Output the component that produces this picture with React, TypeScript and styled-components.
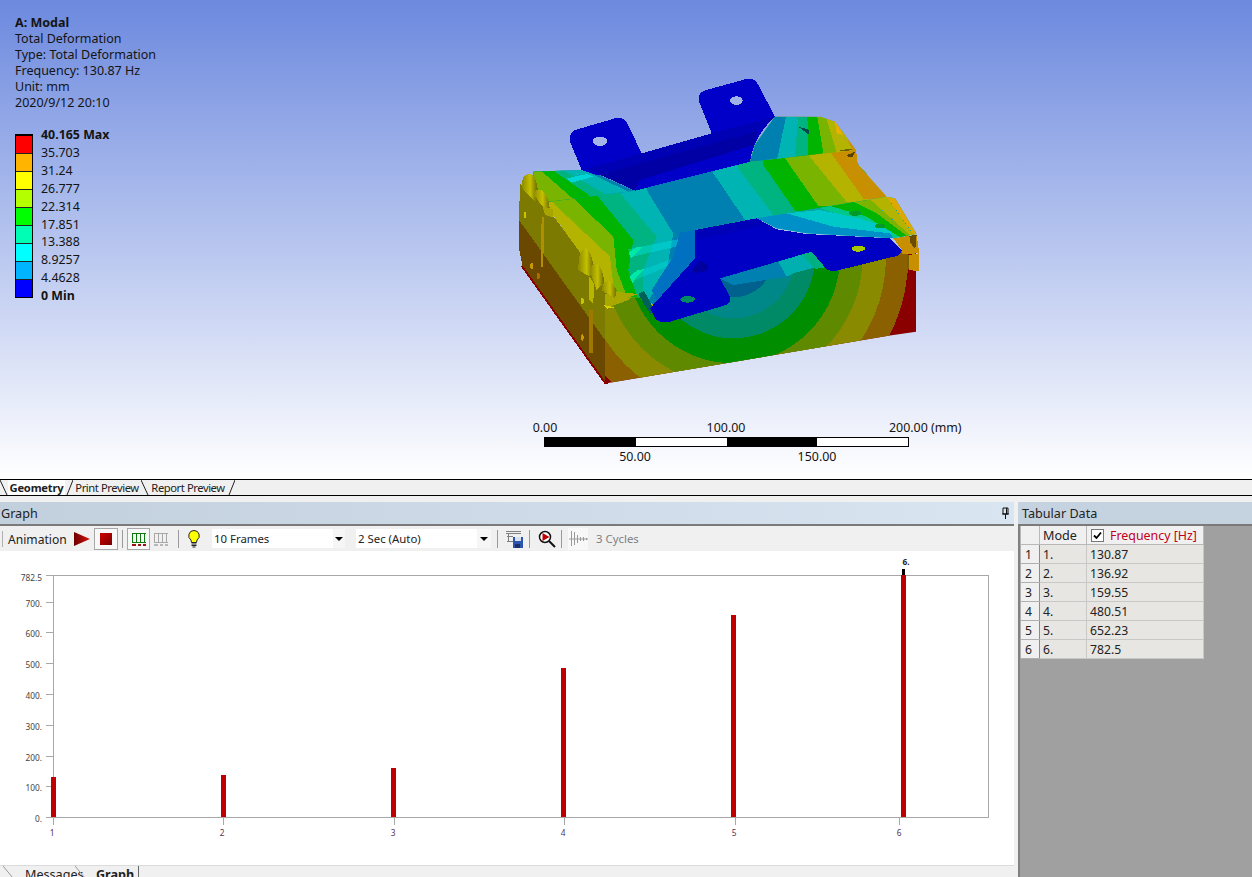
import React from "react";
import styled, { createGlobalStyle } from "styled-components";

const Global = createGlobalStyle`
  html, body { margin: 0; padding: 0; background: #f0f0f0; }
  body { font-family: "Noto Sans", "Open Sans", "Liberation Sans", sans-serif; font-size: 12px; color: #111; }
  #root { width: 1252px; height: 877px; overflow: hidden; }
`;

const Page = styled.div`
  width: 1252px; height: 877px; display: flex; flex-direction: column; overflow: hidden; background: #f0f0f0;
`;
const Viewport = styled.div`
  position: relative; height: 479px; flex: none; overflow: hidden;
  background: linear-gradient(180deg, #6c89de 0%, #ffffff 100%);
`;
const Annotation = styled.div`
  position: absolute; left: 15px; top: 15px; line-height: 16px; font-size: 12.5px; color: #141414;
`;
const AnnotationTitle = styled.div` font-weight: 700; `;
const Legend = styled.div`
  position: absolute; left: 15px; top: 134px; display: flex; gap: 8px;
`;
const LegendBar = styled.div`
  width: 16px; height: 161px; border: 1px solid #000; border-top-width: 2px; display: flex; flex-direction: column;
`;
const Swatch = styled.div<{ $c: string }>`
  flex: 1; background: ${p => p.$c}; & + & { border-top: 1px solid #222; }
`;
const LegendLabels = styled.div`
  display: flex; flex-direction: column; margin-top: -8px; line-height: 17.9px; font-size: 12.4px; color: #141414;
`;
const LegendStrong = styled.div` font-weight: 700; `;
const ModelSvg = styled.svg`
  position: absolute; left: 500px; top: 70px; width: 440px; height: 320px;
`;
const Scale = styled.div`
  position: absolute; left: 544px; top: 437px; width: 365px; height: 10px; box-sizing: border-box;
  border: 1px solid #000; display: grid; grid-template-columns: repeat(4, 1fr); background: #fff;
`;
const ScaleCell = styled.div<{ $dark?: boolean }>` background: ${p => (p.$dark ? "#000" : "#fff")}; `;
const ScaleLabel = styled.span<{ $up?: boolean }>`
  position: absolute; font-size: 12.4px; line-height: 14px; color: #141414; white-space: nowrap;
  top: ${p => (p.$up ? "-17px" : "12px")}; transform: translateX(-50%);
`;
const ScaleUnit = styled(ScaleLabel)` transform: none; `;

const TabBar = styled.div`
  height: 15px; flex: none; display: flex; align-items: stretch; background: #f0f0f0;
  border-top: 1px solid #000; border-bottom: 1px solid #000; overflow: hidden;
`;
const Tab = styled.div<{ $on?: boolean; $w: number }>`
  width: ${p => p.$w}px; flex: none; display: flex; align-items: center; justify-content: center; white-space: nowrap;
  font-size: 11.2px; line-height: 15px; font-weight: ${p => (p.$on ? 700 : 400)};
  letter-spacing: ${p => (p.$on ? "-0.2px" : "-0.42px")};
  background: ${p => (p.$on ? "#fff" : "transparent")}; color: #222;
`;
const Slant = styled.svg` width: 8px; height: 15px; flex: none; `;
const Lower = styled.div` flex: 1; display: flex; min-height: 0; padding-top: 6px; `;
const LeftPane = styled.div` width: 1014px; flex: none; display: flex; flex-direction: column; `;
const RightPane = styled.div`
  flex: 1; margin-left: 4px; display: flex; flex-direction: column; background: #a0a0a0; border-left: 2px solid #808080;
`;
const Header = styled.div`
  height: 22px; flex: none; display: flex; align-items: center; justify-content: space-between; padding: 0 4px 0 1px;
  font-size: 12.6px; color: #222; background: linear-gradient(90deg, #c2cfdd 0%, #d9e5f1 100%);
  border-bottom: 2px solid #7a7a7a;
`;
const RightHeader = styled(Header)` margin-left: -2px; padding-left: 4px; background: #c5d2df; `;
const Toolbar = styled.div`
  height: 25px; flex: none; display: flex; align-items: center; background: #f0f0f0; padding-left: 2px; color: #222;
`;
const Grip = styled.span` width: 1px; height: 16px; background: #b0b0b0; margin-right: 5px; flex: none; `;
const ToolText = styled.span` font-size: 12.1px; width: 60px; flex: none; white-space: nowrap; padding-top: 1px; `;
const ToolSep = styled.span<{ $l?: number; $r?: number }>`
  width: 1px; height: 18px; flex: none; background: #9a9a9a;
  margin-left: ${p => p.$l ?? 4}px; margin-right: ${p => p.$r ?? 4}px;
`;
const IconBtn = styled.span<{ $on?: boolean; $w?: number; $dither?: boolean }>`
  width: ${p => p.$w ?? 22}px; height: 22px; flex: none; display: flex; align-items: center; justify-content: center; box-sizing: border-box;
  ${p => p.$on && "border: 1px solid #a8a8a8; background: #f8f8f8;"}
  ${p => p.$dither && "background: #f8f8f8;"}
`;
const PlayIcon = styled.svg` width: 20px; height: 18px; flex: none; margin-left: 6px; `;
const BulbIcon = styled.svg` width: 12px; height: 18px; flex: none; margin-left: 5px; `;
const PlainIcon = styled.svg` flex: none; `;
const Select = styled.div<{ $w: number; $ml: number }>`
  width: ${p => p.$w}px; height: 19px; flex: none; margin-left: ${p => p.$ml}px; display: flex; align-items: center; justify-content: space-between;
  background: #fff; font-size: 11.4px; line-height: 21px; color: #222; padding-left: 2px; box-sizing: border-box;
`;
const Caret = styled.span<{ $w: number }>`
  width: ${p => p.$w}px; align-self: stretch; background: #f6f6f6; display: flex; align-items: center; justify-content: center;
  &::before { content: ""; border-left: 4px solid transparent; border-right: 4px solid transparent; border-top: 4px solid #000; }
`;
const Dim = styled.span` font-size: 11.4px; color: #808080; margin-left: 8px; white-space: nowrap; `;
const ChartSvg = styled.svg` display: block; width: 1014px; height: 314px; background: #fff; flex: none; `;
const BottomTabs = styled.div`
  flex: 1; min-height: 0; display: flex; background: #f0f0f0; border-top: 1px solid #dcdcdc; padding-left: 3px; overflow: hidden;
`;
const BottomTab = styled.div<{ $on?: boolean; $w: number; $pl: number }>`
  width: ${p => p.$w}px; flex: none; box-sizing: border-box; font-size: 12.6px; line-height: 16px; padding: 1px 0 0 ${p => p.$pl}px; white-space: nowrap; height: 18px;
  font-weight: ${p => (p.$on ? 700 : 400)}; color: #222;
  ${p => p.$on && "border-right: 1px solid #666;"}
`;
const BottomSlant = styled.svg` width: 11px; height: 12px; flex: none; `;
const Table = styled.table`
  border-collapse: collapse; table-layout: fixed; width: 183px; font-size: 12.2px; color: #222;
`;
const HeadCell = styled.th<{ $w: number }>`
  width: ${p => p.$w}px; height: 18px; padding: 1px 0 0 3px; box-sizing: border-box; font-weight: 400; text-align: left;
  background: #f0f0f0; border: 1px solid #b8b8b8; border-top: 0; white-space: nowrap; font-size: 12.6px;
`;
const RowHead = styled.td`
  height: 19px; padding: 1px 0 0 4px; box-sizing: border-box; background: #f0f0f0; border: 1px solid #b0b0b0; border-right-color: #8a8a8a;
`;
const Cell = styled.td`
  height: 19px; padding: 1px 0 0 3px; box-sizing: border-box; background: #e8e6e3; border: 1px solid #c8c8c8;
`;
const FreqHead = styled.div` display: flex; align-items: center; gap: 6px; color: #c00020; font-size: 12.4px; padding-left: 1px; `;
const Check = styled.span`
  width: 13px; height: 13px; flex: none; box-sizing: border-box; border: 1px solid #777; background: #fff; display: flex; align-items: center; justify-content: center;
`;

const LEGEND = ["#ff0000", "#ffb400", "#ffff00", "#b4ff00", "#00ff00", "#00ffb4", "#00ffff", "#00b4ff", "#0000ff"];
const VALUES = ["35.703", "31.24", "26.777", "22.314", "17.851", "13.388", "8.9257", "4.4628"];
const ROWS = ["130.87", "136.92", "159.55", "480.51", "652.23", "782.5"];

const SURFACE = "130,395 400,360 750,275 1050,240 1075,285 1160,380 770,445 585,480 585,565 450,720 420,682 330,682 325,662";

const Model = () => (
  <ModelSvg viewBox="0 0 1320 960" shapeRendering="crispEdges">
    <defs>
      <clipPath id="front"><polygon points="315,672 415,672 660,620 935,540 1210,540 1248,550 1248,785 1165,797 320,940 315,940" /></clipPath>
      <clipPath id="surf"><polygon points={SURFACE} /></clipPath>
      <clipPath id="backL"><polygon points="100,305 240,300 300,315 405,362 145,395 130,390 100,340" /></clipPath>
      <clipPath id="backR"><polygon points="750,275 765,225 825,140 960,140 1005,155 1068,240" /></clipPath>
      <clipPath id="ridge"><polygon points="770,445 1160,380 1185,385 1250,492 1180,505 920,490 830,475" /></clipPath>
      <linearGradient id="bump" x1="0" x2="1" y1="0" y2="0">
        <stop offset="0" stopColor="#8c8a00" /><stop offset="0.55" stopColor="#c4c000" /><stop offset="1" stopColor="#6e6c00" />
      </linearGradient>
    </defs>

    {/* left wall */}
    <polygon points="57,450 315,810 318,940 68,590 58,540" fill="#6a4800" />
    <polygon points="60,340 130,400 345,680 315,810 57,450" fill="#7c7a00" />
    <polygon points="68,590 315,937 325,940 315,940 66,590" fill="#8a0000" stroke="#8a0000" strokeWidth="4" />
    <polygon points="130,395 150,395 352,650 325,665" fill="#b4b400" />
    <polygon points="125,440 132,440 130,590 122,590" fill="#b09000" />
    <polygon points="268,720 280,720 278,850 268,850" fill="#a07800" />
    <polygon points="268,620 282,640 280,700 268,690" fill="#b8b400" />
    <ellipse cx="75" cy="435" rx="4" ry="10" fill="#c8c400" />
    <ellipse cx="95" cy="588" rx="4" ry="10" fill="#c89800" />
    <ellipse cx="115" cy="618" rx="4" ry="10" fill="#a87000" />
    <ellipse cx="247" cy="693" rx="4" ry="10" fill="#c8c400" />
    <ellipse cx="247" cy="803" rx="4" ry="10" fill="#c89800" />

    {/* front face with circular bands */}
    <g clipPath="url(#front)">
      <rect x="300" y="500" width="1000" height="460" fill="#8a0000" />
      <circle cx="700" cy="560" r="525" fill="#8a6000" />
      <circle cx="700" cy="560" r="458" fill="#8a8a00" />
      <circle cx="700" cy="560" r="388" fill="#5f8a00" />
      <circle cx="700" cy="560" r="320" fill="#008e00" />
      <circle cx="700" cy="560" r="245" fill="#008a66" />
      <circle cx="700" cy="560" r="185" fill="#008888" />
      <circle cx="700" cy="560" r="122" fill="#00608e" />
    </g>
    <polygon points="315,672 415,672 380,692 345,705 315,712" fill="#a8a800" />
    <polygon points="660,625 835,575 860,620 700,645" fill="#0080b0" />
    <polygon points="835,575 905,553 945,592 880,610 860,620" fill="#00b0b0" />
    <polygon points="905,553 935,545 975,592 945,597" fill="#00b080" />

    {/* main surface */}
    <g clipPath="url(#surf)">
      <rect x="100" y="220" width="1000" height="520" fill="#b4b400" />
      <polygon points="150,390 330,560 345,690 1100,700 1100,200 150,200" fill="#78b400" />
      <polygon points="215,380 340,500 350,600 385,690 1100,700 1100,200 215,200" fill="#00b400" />
      <polygon points="290,375 400,510 385,600 415,690 1100,700 1100,200 290,200" fill="#00b482" />
      <polygon points="360,370 470,500 430,600 430,690 1100,700 1100,200 360,200" fill="#00b4b4" />
      <polygon points="440,360 520,490 500,600 440,700 1100,720 1100,200 440,200" fill="#0080b0" />
      <polygon points="640,310 735,450 1100,450 1100,200 640,200" fill="#00b4b4" />
      <polygon points="715,295 820,435 1100,435 1100,200 715,200" fill="#00b482" />
      <polygon points="790,285 885,422 1100,422 1100,200 790,200" fill="#00b400" />
      <polygon points="855,265 955,408 1100,408 1100,200 855,200" fill="#78b400" />
      <polygon points="925,255 1040,396 1200,396 1200,200 925,200" fill="#b4b400" />
      <polygon points="990,245 1092,388 1200,388 1200,200 990,200" fill="#c89000" />
    </g>
    <polygon points="330,664 415,672 380,684 340,700 318,690" fill="#a8a800" />
    <polygon points="1040,242 1068,240 1074,288 1045,285" fill="#c89000" />
    <polygon points="1040,255 1066,245 1058,260 1046,262" fill="#5a4000" />

    {/* lighter strips on the surface beside the front bracket */}
    <polygon points="385,538 585,498 585,516 390,562" fill="#00e0e0" opacity="0.45" />
    <polygon points="395,612 585,540 585,556 400,632" fill="#00e0e0" opacity="0.35" />
    <polygon points="385,548 410,532 430,530 405,552 395,566" fill="#00e8a8" />
    <polygon points="388,620 412,600 432,598 408,622 398,640" fill="#00e8a8" />
    <polygon points="540,488 585,480 585,565 470,690 455,660 520,560" fill="#0070c0" />
    <polygon points="415,672 432,662 465,725 450,732" fill="#00605a" />

    {/* back strips */}
    <g clipPath="url(#backL)">
      <rect x="90" y="295" width="330" height="110" fill="#0080b0" />
      <polygon points="90,295 240,295 385,365 130,400" fill="#00b4b4" />
      <polygon points="90,295 180,295 330,380 130,400" fill="#00b482" />
      <polygon points="90,295 150,295 285,388 130,400" fill="#00b400" />
      <polygon points="90,295 115,295 230,396 130,400" fill="#78b400" />
      <polygon points="200,325 262,312 280,320 215,338" fill="#00d4d4" />
    </g>
    <g clipPath="url(#backR)">
      <rect x="740" y="130" width="340" height="150" fill="#c89000" />
      <polygon points="740,130 1005,130 1060,245 740,285" fill="#b4b400" />
      <polygon points="740,130 975,130 1010,248 740,285" fill="#78b400" />
      <polygon points="740,130 950,130 970,250 740,285" fill="#00b400" />
      <polygon points="740,130 922,130 925,255 740,285" fill="#00b482" />
      <polygon points="740,130 895,130 885,260 740,285" fill="#00b4b4" />
      <polygon points="740,130 860,130 832,265 740,285" fill="#0080b0" />
      <polygon points="895,170 925,178 928,195 908,180" fill="#004a50" />
    </g>
    <polygon points="1005,155 1030,195 1010,190" fill="#e8b000" />
    <polygon points="1010,240 1062,237 1040,244" fill="#6a6000" />

    {/* back bracket */}
    <path d="M245 300 L210 215 Q205 190 225 180 L345 145 Q372 140 382 160 L425 250 L635 190 L597 95 Q592 72 612 62 L735 28 Q765 22 775 45 L825 140 Q760 200 750 275 L405 362 Q360 320 290 315 Z" fill="#0000c8" />
    <polygon points="262,296 425,250 635,190 818,142 790,175 310,318" fill="#0000b4" />
    <polygon points="300,314 775,182 760,225 420,330 405,362" fill="#0000a4" />
    <ellipse cx="300" cy="214" rx="22" ry="14" fill="#a4b6e8" />
    <ellipse cx="709" cy="92" rx="19" ry="13" fill="#a0b2e6" />

    {/* right ridge */}
    <g clipPath="url(#ridge)">
      <rect x="760" y="370" width="500" height="150" fill="#00a8a0" />
      <polygon points="960,415 1000,400 1110,440 1215,505 1100,500 1040,440" fill="#00c88a" />
      <polygon points="860,430 960,420 1080,445 1190,482 1172,495 1000,470" fill="#00c8c8" />
      <polygon points="770,445 860,430 1000,470 1170,490 1182,506 920,492 830,477" fill="#0090c8" />
      <polygon points="990,408 1065,395 1130,430 1232,500 1210,508 1100,440" fill="#00b400" />
      <polygon points="1060,395 1110,388 1190,460 1242,498 1232,506 1130,430" fill="#78b400" />
      <polygon points="1110,388 1160,380 1230,480 1246,498 1238,502" fill="#b4b400" />
      <polygon points="1160,380 1190,385 1252,492 1244,498" fill="#e0a800" />
    </g>
    <ellipse cx="1065" cy="430" rx="18" ry="8" fill="#009a28" />
    <ellipse cx="1140" cy="468" rx="15" ry="6" fill="#009a28" />

    {/* front bracket */}
    <path d="M585 480 L770 445 L830 478 L920 492 L1170 505 L1205 540 Q1205 552 1190 558 L1010 602 Q985 606 975 592 L935 545 L660 625 L690 680 Q695 698 675 706 L510 755 Q480 762 465 745 L450 715 L585 565 Z" fill="#0000c4" />
    <polygon points="585,480 770,445 800,465 585,510" fill="#0000b8" />
    <polygon points="600,572 625,585 620,602 590,610 575,600" fill="#0000a0" />
    <ellipse cx="1075" cy="536" rx="20" ry="9" fill="#a8c800" />
    <ellipse cx="563" cy="688" rx="22" ry="10" fill="#008a66" />

    {/* right corner */}
    <polygon points="1180,505 1250,494 1258,550 1205,552 1205,540" fill="#c89000" />
    <polygon points="1228,498 1250,494 1246,538 1232,520" fill="#6a4c00" />
    <polygon points="1222,556 1258,550 1258,604 1226,600" fill="#c89000" />
    <polygon points="1222,556 1228,556 1226,598 1220,596" fill="#7a6000" />

    {/* bumps on the left wall */}
    <path d="M65 345 Q66 310 90 312 Q110 316 112 360 L112 400 L70 360 Z" fill="url(#bump)" />
    <path d="M100 370 Q112 350 130 365 Q145 380 148 405 L150 430 L120 400 Z" fill="url(#bump)" />
    <path d="M235 600 Q235 535 258 535 Q276 545 280 590 L270 620 Z" fill="url(#bump)" />
    <path d="M270 605 Q280 565 300 590 Q312 610 312 640 L290 660 Z" fill="url(#bump)" />
    <path d="M305 660 Q318 615 335 640 L350 660 L345 685 L320 670 Z" fill="url(#bump)" />
    <polygon points="312,705 345,712 320,716" fill="#d8d000" />
    <polygon points="128,410 160,418 158,442 135,435" fill="#a8a400" />
  </ModelSvg>
);

const Y_TICKS: [string, number][] = [["782.5", 577], ["700.", 603], ["600.", 633], ["500.", 664], ["400.", 695], ["300.", 726], ["200.", 757], ["100.", 787], ["0.", 818]];
const BARS: [string, number, number, number][] = [["1", 52, 53.5, 777], ["2", 222, 223.5, 775], ["3", 393, 393.5, 768], ["4", 563, 563.5, 668], ["5", 734, 733.5, 615], ["6", 899, 903.5, 575]];

const Chart = () => (
  <ChartSvg viewBox="0 551 1014 314" fontFamily="'Noto Sans', sans-serif">
    <rect x="53.5" y="575.5" width="935" height="242" fill="#fff" stroke="#a8a8a8" />
    {Y_TICKS.map(([t, y]) => (
      <g key={t}>
        <line x1="46" x2="53" y1={y === 577 ? 575.5 : y - 0.5} y2={y === 577 ? 575.5 : y - 0.5} stroke="#a8a8a8" />
        <text x="42" y={y + 4} textAnchor="end" fontSize="8.3" fill="#444">{t}</text>
      </g>
    ))}
    {BARS.map(([t, lx, bx, top]) => (
      <g key={t}>
        <rect x={bx - 2.5} y={top} width="5" height={817 - top} fill="#c00000" />
        <line x1={t === "6" ? 899.5 : lx + 1.5} x2={t === "6" ? 899.5 : lx + 1.5} y1="818" y2="825" stroke="#a8a8a8" />
        <text x={lx} y="836" textAnchor="middle" fontSize="8.3" fill="#553355">{t}</text>
      </g>
    ))}
    <rect x="902" y="569" width="3" height="6" fill="#000" />
    <text x="906" y="565" textAnchor="middle" fontSize="8.3" fontWeight="700" fill="#222">6.</text>
  </ChartSvg>
);

const SlashBack = () => <Slant viewBox="0 0 8 15"><line x1="0" y1="0" x2="7" y2="15" stroke="#222" /></Slant>;
const SlashFwd = () => <Slant viewBox="0 0 8 15"><line x1="2" y1="15" x2="8" y2="0" stroke="#222" /></Slant>;

export default function App() {
  return (
    <Page>
      <Global />
      <Viewport>
        <Annotation>
          <AnnotationTitle>A: Modal</AnnotationTitle>
          <div>Total Deformation</div>
          <div>Type: Total Deformation</div>
          <div>Frequency: 130.87 Hz</div>
          <div>Unit: mm</div>
          <div>2020/9/12 20:10</div>
        </Annotation>
        <Legend>
          <LegendBar>{LEGEND.map(c => <Swatch key={c} $c={c} />)}</LegendBar>
          <LegendLabels>
            <LegendStrong>40.165 Max</LegendStrong>
            {VALUES.map(v => <div key={v}>{v}</div>)}
            <LegendStrong>0 Min</LegendStrong>
          </LegendLabels>
        </Legend>
        <Model />
        <Scale>
          <ScaleCell $dark /><ScaleCell /><ScaleCell $dark /><ScaleCell />
          <ScaleLabel $up style={{ left: 0 }}>0.00</ScaleLabel>
          <ScaleLabel $up style={{ left: 181 }}>100.00</ScaleLabel>
          <ScaleUnit $up style={{ left: 344 }}>200.00 (mm)</ScaleUnit>
          <ScaleLabel style={{ left: 90 }}>50.00</ScaleLabel>
          <ScaleLabel style={{ left: 272 }}>150.00</ScaleLabel>
        </Scale>
      </Viewport>
      <TabBar>
        <SlashBack />
        <Tab $on $w={57}>Geometry</Tab>
        <SlashFwd />
        <Tab $w={68}>Print Preview</Tab>
        <SlashBack />
        <Tab $w={78}>Report Preview</Tab>
        <SlashFwd />
      </TabBar>
      <Lower>
        <LeftPane>
          <Header>
            <span>Graph</span>
            <svg width="9" height="12" viewBox="0 0 9 12"><path d="M2 1h5v6H2zM1 7h7M4.500 7v5M5.500 1v6" fill="none" stroke="#111" /></svg>
          </Header>
          <Toolbar>
            <Grip />
            <ToolText>Animation</ToolText>
            <PlayIcon viewBox="0 0 20 18">
              <defs><linearGradient id="pl" x1="0" x2="1"><stop offset="0" stopColor="#6e0000" /><stop offset="1" stopColor="#d81010" /></linearGradient></defs>
              <polygon points="0,2 16,9 0,16" fill="url(#pl)" />
            </PlayIcon>
            <IconBtn $on $w={24}>
              <svg width="12" height="12" viewBox="0 0 12 12"><defs><linearGradient id="st" x1="0" x2="1" y1="0" y2="1"><stop offset="0" stopColor="#d00000" /><stop offset="1" stopColor="#7a0000" /></linearGradient></defs><rect width="12" height="12" fill="url(#st)" /></svg>
            </IconBtn>
            <ToolSep $l={4} $r={4} />
            <IconBtn $on $w={23}>
              <svg width="16" height="16" viewBox="0 0 16 16"><path d="M1 2.500h14M1.500 2.500v9M5.500 2.500v9M9.500 2.500v9M13.500 2.500v9M1 11.500h14" fill="none" stroke="#0a7a0a" /><path d="M1 14h4M7 14h3M12 14h3" stroke="#a01010" strokeWidth="2" /></svg>
            </IconBtn>
            <IconBtn $w={22}>
              <svg width="16" height="16" viewBox="0 0 16 16"><path d="M1 2.500h14M1.500 2.500v9M5.500 2.500v9M9.500 2.500v9M13.500 2.500v9M1 11.500h14" fill="none" stroke="#a8a8a8" /><path d="M1 14h4M7 14h3M12 14h3" stroke="#b8b8b8" strokeWidth="2" /></svg>
            </IconBtn>
            <ToolSep $l={6} $r={4} />
            <BulbIcon viewBox="0 0 12 18">
              <path d="M6 .5a5.200 5.200 0 0 1 3 9.500l-.5 2.500h-5L3 10A5.200 5.200 0 0 1 6 .5z" fill="#ffff00" stroke="#222" />
              <path d="M3.500 14h5M3.500 15.500h5M4.500 17h3" stroke="#222" />
            </BulbIcon>
            <Select $w={133} $ml={12}>10 Frames<Caret $w={12} /></Select>
            <Select $w={135} $ml={11}>2 Sec (Auto)<Caret $w={14} /></Select>
            <ToolSep $l={6} $r={6} />
            <IconBtn $w={20}>
              <svg width="17" height="18" viewBox="0 0 17 18">
                <path d="M0 1.500h15M0 3.500h15M2.500 3.500v8M1 11.500h6M1 6.500h6" fill="none" stroke="#808080" />
                <rect x="7" y="7" width="10" height="11" fill="#2c55ad" />
                <rect x="9" y="7" width="6" height="4" fill="#d8dfee" />
                <rect x="9" y="14" width="5" height="4" fill="#1c2f68" />
              </svg>
            </IconBtn>
            <ToolSep $l={5} $r={8} />
            <PlainIcon width="18" height="18" viewBox="0 0 18 18">
              <circle cx="7" cy="7" r="5.500" fill="#fff" stroke="#111" strokeWidth="1.500" />
              <polygon points="4.500,3 11.500,7 4.500,11" fill="#c00000" />
              <path d="M11 11l6 6" stroke="#111" strokeWidth="2" />
            </PlainIcon>
            <ToolSep $l={5} $r={6} />
            <IconBtn $dither $w={20}>
              <svg width="19" height="18" viewBox="0 0 19 18"><path d="M2.500 1v15M5.500 2v13M8.500 5v8M11.500 7v4M14.500 7v4M17.500 8v2M0 9h19" fill="none" stroke="#9a9a9a" /></svg>
            </IconBtn>
            <Dim>3 Cycles</Dim>
          </Toolbar>
          <Chart />
          <BottomTabs>
            <BottomSlant viewBox="0 0 11 12"><line x1="0" y1="0" x2="10" y2="12" stroke="#999" /></BottomSlant>
            <BottomTab $w={61} $pl={11}>Messages</BottomTab>
            <BottomSlant viewBox="0 0 11 12"><line x1="0" y1="0" x2="10" y2="12" stroke="#999" /></BottomSlant>
            <BottomTab $on $w={53} $pl={10}>Graph</BottomTab>
          </BottomTabs>
        </LeftPane>
        <RightPane>
          <RightHeader><span>Tabular Data</span></RightHeader>
          <Table>
            <thead>
              <tr>
                <HeadCell $w={19} />
                <HeadCell $w={47}>Mode</HeadCell>
                <HeadCell $w={117}>
                  <FreqHead>
                    <Check><svg width="9" height="9" viewBox="0 0 9 9"><path d="M1 4.500l2.500 2.500L8 1.500" fill="none" stroke="#000" strokeWidth="1.800" /></svg></Check>
                    Frequency [Hz]
                  </FreqHead>
                </HeadCell>
              </tr>
            </thead>
            <tbody>
              {ROWS.map((v, i) => (
                <tr key={v}>
                  <RowHead>{i + 1}</RowHead>
                  <Cell>{i + 1}.</Cell>
                  <Cell>{v}</Cell>
                </tr>
              ))}
            </tbody>
          </Table>
        </RightPane>
      </Lower>
    </Page>
  );
}
